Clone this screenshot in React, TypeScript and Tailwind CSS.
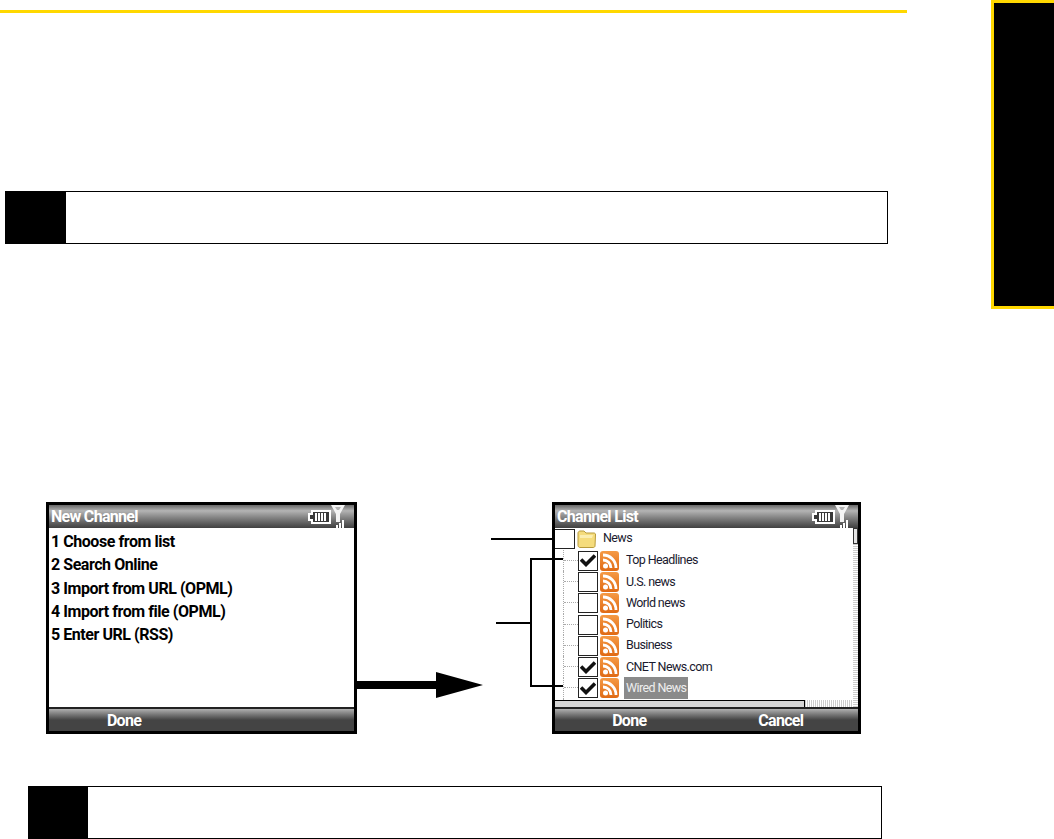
const font = { fontFamily: 'Roboto, "Noto Sans", sans-serif' }

const leftItems = ["1 Choose from list", "2 Search Online", "3 Import from URL (OPML)", "4 Import from file (OPML)", "5 Enter URL (RSS)"]

const channels = [
  { name: "Top Headlines", checked: true },
  { name: "U.S. news", checked: false },
  { name: "World news", checked: false },
  { name: "Politics", checked: false },
  { name: "Business", checked: false },
  { name: "CNET News.com", checked: true },
  { name: "Wired News", checked: true, selected: true },
  { name: "", checked: true },
]

function StatusIcons() {
  return (
    <svg width="37" height="23" viewBox="0 0 37 23" className="shrink-0">
      <path d="M0 8h3V5h20v14H3v-3H0z" fill="#fff" />
      <path d="M2 10h3V7h16v10H5v-3H2z" fill="#3a3a3a" />
      <path d="M7 8h2v8H7zM10 8h2v8h-2zM13 8h2v8h-2zM16 8h2v8h-2z" fill="#fff" />
      <path d="M23 0h14l-5 9v8h-4V9z" fill="#f4f4f4" />
      <path d="M27 2h6l-2 3h-2z" fill="#b5b5b5" />
      <path d="M28 20h2v3h-2zM31 18h2v5h-2zM34 15h2v8h-2z" fill="#fff" />
    </svg>
  )
}

function TitleBar({ title }: { title: string }) {
  return (
    <div className="flex h-[23px] shrink-0 items-center justify-between bg-gradient-to-b from-[#6a6a6a] via-[#b4b4b4] via-25% to-[#404040] pl-[2px] pr-[9px]">
      <span className="text-[16px] font-bold tracking-[-0.7px] text-white">{title}</span>
      <StatusIcons />
    </div>
  )
}

function SoftKeys({ left, right }: { left: string; right?: string }) {
  return (
    <div className="flex h-[24px] shrink-0 items-center border-t-2 border-[#222] bg-gradient-to-b from-[#b0b0b0] via-[#444] via-50% to-[#444] pt-[2px] text-[16px] font-bold tracking-[-0.7px] text-white">
      <span className="w-[150px] text-center">{left}</span>
      {right && <span className="w-[156px] text-center">{right}</span>}
    </div>
  )
}

function Rss() {
  return (
    <svg width="19" height="20" viewBox="0 0 19 20" className="shrink-0">
      <defs>
        <linearGradient id="rss-bg" x1="0" y1="0" x2="0" y2="1">
          <stop offset="0" stopColor="#f59a45" />
          <stop offset="1" stopColor="#e06a14" />
        </linearGradient>
      </defs>
      <rect width="19" height="20" rx="3" fill="url(#rss-bg)" />
      <circle cx="5.500" cy="15" r="2.500" fill="#fff" />
      <path d="M3 9a8 8 0 0 1 8 8M3 4a13 13 0 0 1 13 13" fill="none" stroke="#fff" strokeWidth="2.800" />
    </svg>
  )
}

function Check() {
  return (
    <svg width="16" height="13" viewBox="0 0 16 13">
      <path d="M1 5.500l5 5 9-9" fill="none" stroke="#111" strokeWidth="3.600" />
    </svg>
  )
}

function Folder() {
  return (
    <svg width="19" height="18" viewBox="0 0 19 18" className="shrink-0">
      <path d="M1 3c0-1 1-2 2-2h4l2 2h8c1 0 1.500 1 1.500 1v1L18 16c0 1-1 1.500-2 1.500H3c-1 0-2-1-2-2z" fill="#f5dc7c" stroke="#b89b3c" />
      <path d="M3 5h13l-1 3H3z" fill="#fbeeb0" />
    </svg>
  )
}

function LeftPhone() {
  return (
    <div className="flex h-[232px] w-[311px] flex-col border-[3px] border-black bg-white">
      <TitleBar title="New Channel" />
      <ul className="flex-1 pl-[2px] pt-[2px] text-[16px] font-bold leading-[23.3px] tracking-[-0.45px] text-black">
        {leftItems.map((item) => (
          <li key={item}>{item}</li>
        ))}
      </ul>
      <SoftKeys left="Done" />
    </div>
  )
}

function RightPhone() {
  return (
    <div className="flex h-[232px] w-[309px] flex-col border-[3px] border-black bg-white">
      <TitleBar title="Channel List" />
      <div className="flex min-h-0 flex-1">
        <div className="flex min-w-0 flex-1 flex-col">
          <div className="flex-1 overflow-hidden text-[12.500px] tracking-[-0.6px] text-[#1a1a2e]">
            <div className="flex h-[21px] items-center">
              <span className="h-[20px] w-[20px] shrink-0 border border-[#222] border-l-0 bg-white" />
              <span className="ml-[2px]"><Folder /></span>
              <span className="ml-[7px]">News</span>
            </div>
            <div className="h-[1px]" />
            {channels.map((c) => (
              <div key={c.name} className="flex h-[21.3px] items-center">
                <span className="ml-[8px] h-full w-[15px] shrink-0 border-l border-dotted border-[#aaa]">
                  <span className="block h-1/2 border-b border-dotted border-[#aaa]" />
                </span>
                <span className="flex h-[20px] w-[20px] shrink-0 items-center justify-center border border-[#222]">
                  {c.checked && <Check />}
                </span>
                <span className="ml-[2px]"><Rss /></span>
                <span className={c.selected ? "ml-[5px] bg-[#8a8a8a] px-[2px] leading-[22px] text-[#eee]" : "ml-[7px]"}>{c.name}</span>
              </div>
            ))}
          </div>
          <div className="flex h-[7px] shrink-0">
            <div className="w-[250px] border-r border-t border-black bg-[#d6d6d6]" />
            <div className="flex-1 bg-[repeating-linear-gradient(90deg,#ccc_0_1px,#fff_1px_2px)]" />
          </div>
        </div>
        <div className="flex w-[5px] shrink-0 flex-col">
          <div className="h-[16px] border border-[#333] bg-[#e4e4e4]" />
          <div className="flex-1 bg-[repeating-linear-gradient(0deg,#ccc_0_1px,#fff_1px_2px)]" />
        </div>
      </div>
      <SoftKeys left="Done" right="Cancel" />
    </div>
  )
}

function Callouts() {
  return (
    <>
      <div className="absolute left-[445px] top-[36px] h-[2px] w-[62px] bg-black" />
      <div className="absolute left-[484px] top-[56px] h-[129px] w-[33px] border-y-2 border-l-2 border-black" />
      <div className="absolute left-[450px] top-[120px] h-[2px] w-[35px] bg-black" />
      <svg width="126" height="26" viewBox="0 0 126 26" className="absolute left-[311px] top-[170px]">
        <path d="M0 9h79V0l47 13-47 13v-9H0z" fill="#000" />
      </svg>
    </>
  )
}

export default function App() {
  return (
    <div className="flex h-[839px] w-[1054px] overflow-hidden bg-white" style={font}>
      <div className="w-[991px] shrink-0">
        <div className="mt-[10px] h-[3px] w-[907px] bg-[#ffd800]" />

        <div className="ml-[5px] mt-[178px] flex h-[53px] w-[883px] border border-black">
          <div className="w-[60px] bg-black" />
        </div>

        <div className="relative ml-[46px] mt-[258px] flex justify-between pr-[130px]">
          <LeftPhone />
          <RightPhone />
          <Callouts />
        </div>

        <div className="ml-[28px] mt-[52px] flex h-[53px] w-[854px] border border-black">
          <div className="w-[59px] bg-black" />
        </div>
      </div>

      <div className="h-[309px] w-[63px] border-[3px] border-r-0 border-[#ffd800] bg-black" />
    </div>
  )
}
